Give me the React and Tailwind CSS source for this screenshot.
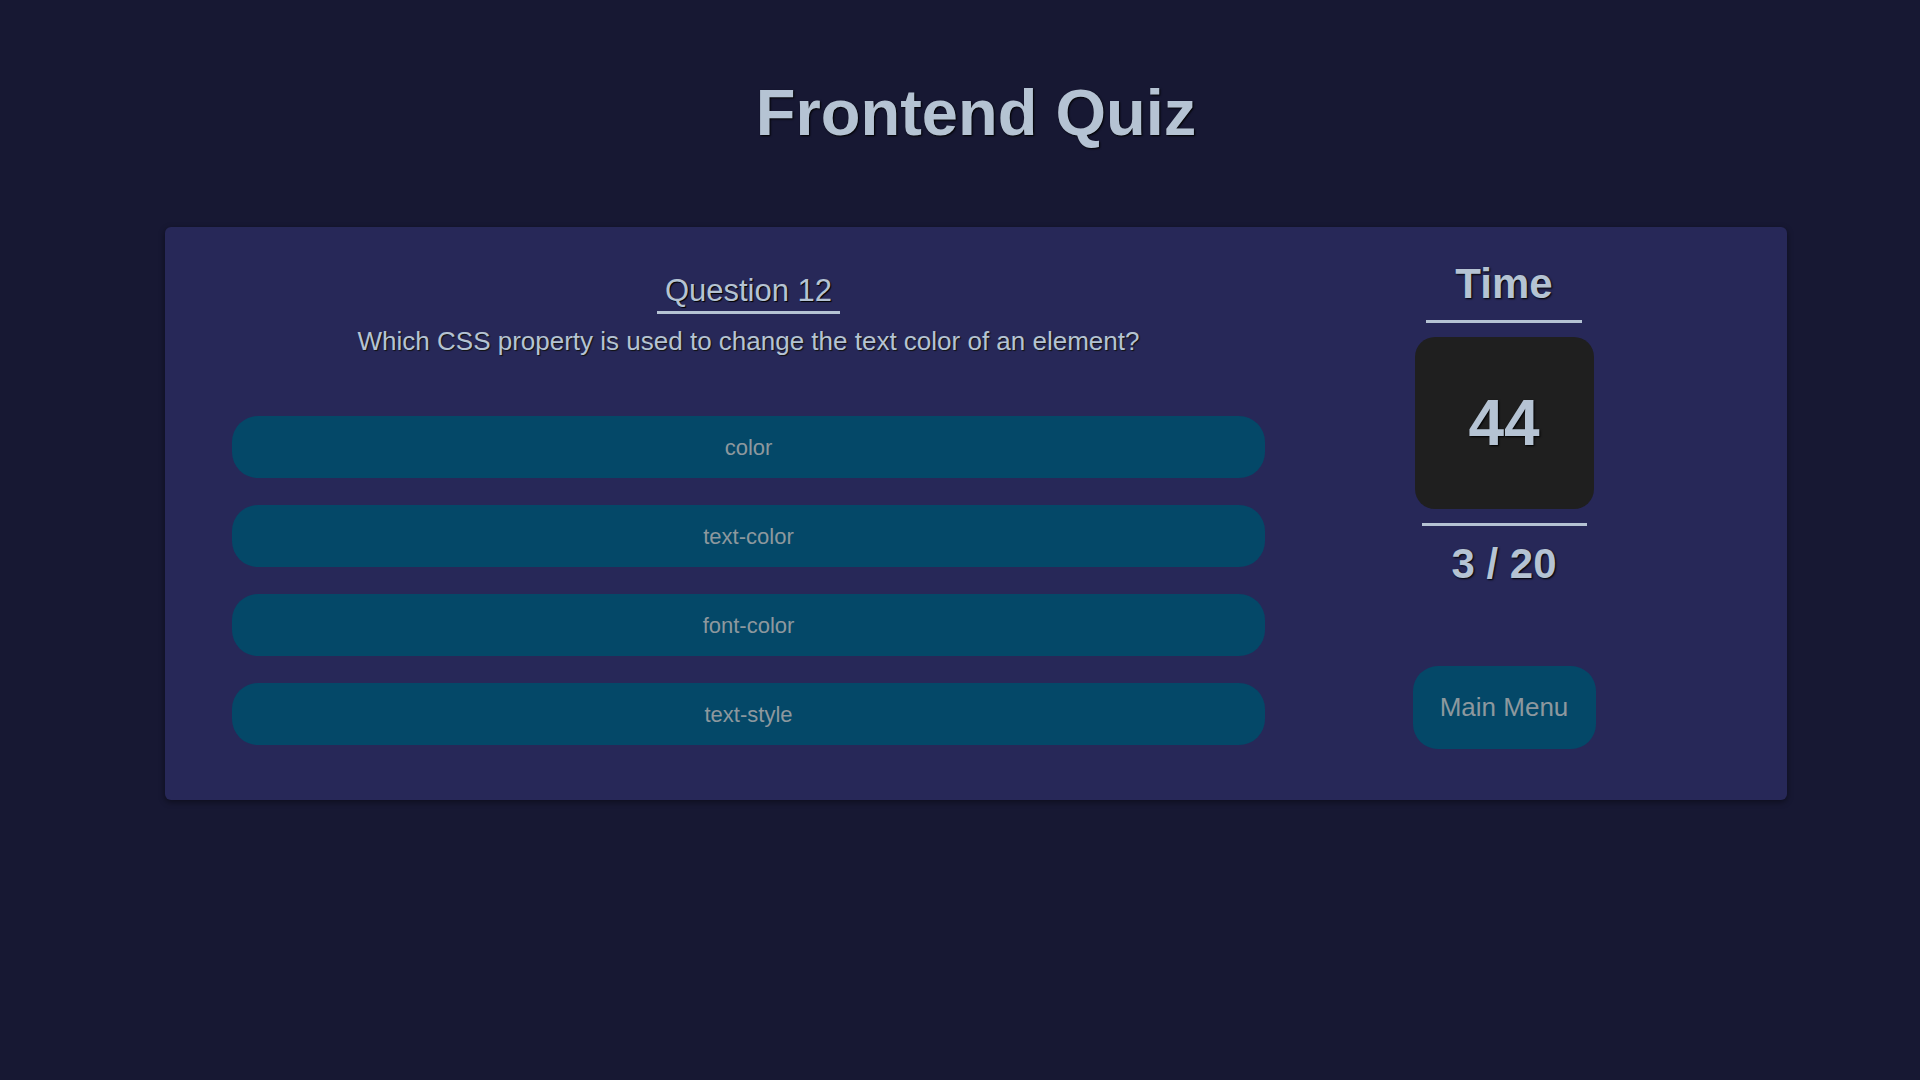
import React from 'react';

const options = ['color', 'text-color', 'font-color', 'text-style'];

export default function App() {
    const current = 12;
    const question = 'Which CSS property is used to change the text color of an element?';

    return (
        <div className="min-h-screen bg-[#171833] font-['Liberation_Sans',Arial,sans-serif] text-[#b5c3d3] overflow-hidden">
            <h1 className="pt-[76px] pl-[32px] text-center text-[65px] font-bold leading-[74px] [text-shadow:1px_1px_2px_#000]">
                Frontend Quiz
            </h1>

            {/* Quiz card */}
            <div className="mt-[77px] ml-[165px] w-[1622px] h-[573px] rounded-md bg-[#272858] shadow-[0_2px_6px_rgba(0,0,0,0.45)] flex pl-[67px]">
                {/* Question + answers */}
                <div className="w-[1033px] flex flex-col items-center pt-[46px]">
                    <h2 className="text-[31px] leading-[36px] px-2 pb-[2px] border-b-[3px] border-[#b5c3d3] [text-shadow:1px_1px_1px_#000]">
                        Question {current}
                    </h2>
                    <p className="mt-[12px] text-[26px] leading-[30px] [text-shadow:1px_1px_1px_#111]">{question}</p>

                    <div className="mt-[60px] w-full flex flex-col gap-[27px]">
                        {options.map((opt) => (
                            <button
                                key={opt}
                                type="button"
                                className="h-[62px] w-full rounded-[26px] bg-[#044868] text-[22px] text-[#8d989e]"
                            >
                                {opt}
                            </button>
                        ))}
                    </div>
                </div>

                {/* Timer side */}
                <div className="w-[478px] flex flex-col items-center pt-[33px]">
                    <div className="text-[42px] font-bold leading-[48px] px-[29px] pb-[12px] border-b-[3px] border-[#b5c3d3] [text-shadow:1px_1px_2px_#000]">
                        Time
                    </div>
                    <div className="mt-[14px] w-[179px] h-[172px] rounded-[20px] bg-[#1f1f1f] flex items-center justify-center text-[64px] font-bold [text-shadow:1px_1px_2px_#000]">
                        44
                    </div>
                    <div className="mt-[14px] w-[165px] h-[3px] bg-[#b5c3d3]" />
                    <div className="mt-[14px] text-[42px] font-bold leading-[48px] [text-shadow:1px_1px_2px_#000]">
                        3 / 20
                    </div>
                    <button
                        type="button"
                        className="mt-[78px] w-[183px] h-[83px] rounded-[25px] bg-[#044868] text-[26px] text-[#8d989e]"
                    >
                        Main Menu
                    </button>
                </div>
            </div>
        </div>
    );
}
